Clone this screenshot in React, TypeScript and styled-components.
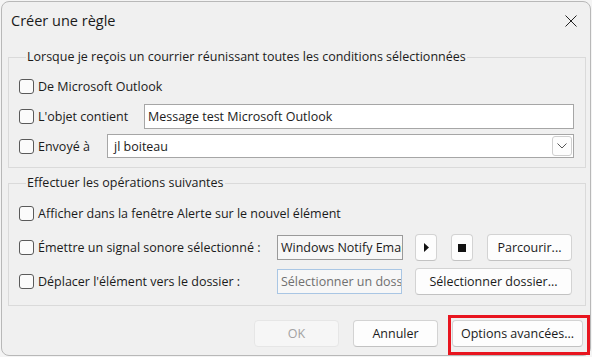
import React from "react"
import styled, { createGlobalStyle } from "styled-components"

const GlobalStyle = createGlobalStyle`
  html, body {
    margin: 0;
    padding: 0;
    background: #f4f4f4;
  }
  body {
    font-family: "Segoe UI", "Open Sans", "Noto Sans", sans-serif;
    font-size: 12.5px;
    color: #1b1b1b;
  }
  * {
    box-sizing: border-box;
  }
`

const Window = styled.div`
  margin: 1px 0 0 1px;
  width: 590px;
  height: 355px;
  background: #f0f0f0;
  border: 1px solid #b8b8b8;
  border-radius: 8px;
  display: flex;
  flex-direction: column;
`

const TitleBar = styled.div`
  height: 38px;
  display: flex;
  align-items: center;
  justify-content: space-between;
  padding: 0 12px 0 9px;
`

const Title = styled.div`
  font-size: 14.5px;
  color: #1a1a1a;
  margin-top: -1px;
`

const CloseButton = styled.button`
  border: none;
  background: transparent;
  padding: 0;
  width: 14px;
  height: 14px;
  display: flex;
  align-items: center;
  justify-content: center;
  margin-top: -1px;
`

const Body = styled.div`
  flex: 1;
  display: flex;
  flex-direction: column;
  padding: 8px 4px 0 6px;
`

const Group = styled.fieldset<{ $gap: number; $padTop: number; $padBottom: number }>`
  margin: 0;
  border: 1px solid #dadada;
  padding: ${(p) => p.$padTop}px 11px ${(p) => p.$padBottom}px 10px;
  display: flex;
  flex-direction: column;
  gap: ${(p) => p.$gap}px;
  min-width: 0;

  & + & {
    margin-top: 6px;
  }
`

const Legend = styled.legend`
  padding: 0 1px;
  margin-left: 7px;
  height: 18px;
  line-height: 18px;
`

const Row = styled.div<{ $height: number }>`
  height: ${(p) => p.$height}px;
  display: flex;
  align-items: center;
`

const CheckLabel = styled.label<{ $width?: number }>`
  display: flex;
  align-items: center;
  gap: 4px;
  flex: none;
  width: ${(p) => (p.$width ? `${p.$width}px` : "auto")};
  white-space: nowrap;
`

const Box = styled.span`
  width: 15px;
  height: 15px;
  border: 1px solid #5a5a5a;
  border-radius: 3px;
  background: #fbfbfb;
  flex: none;
`

const TextInput = styled.div<{ $width?: number; $variant?: "normal" | "readonly" | "focus" }>`
  height: 25px;
  width: ${(p) => (p.$width ? `${p.$width}px` : "auto")};
  flex: ${(p) => (p.$width ? "none" : "1")};
  border: 1px solid
    ${(p) => (p.$variant === "focus" ? "#a9c6e4" : p.$variant === "readonly" ? "#9a9a9a" : "#a6a6a6")};
  background: ${(p) => (p.$variant === "normal" ? "#ffffff" : "#f7f7f7")};
  color: ${(p) => (p.$variant === "focus" ? "#707070" : "#1b1b1b")};
  display: flex;
  align-items: center;
  padding-left: 3px;
  white-space: nowrap;
  overflow: hidden;
`

const Combo = styled.div`
  flex: 1;
  height: 24px;
  border: 1px solid #a6a6a6;
  background: #ffffff;
  display: flex;
  align-items: center;
  justify-content: space-between;
  padding: 0 1px 0 6px;
`

const ComboArrow = styled.span`
  width: 20px;
  height: 20px;
  border: 1px solid #cfcfcf;
  border-radius: 3px;
  background: #fdfdfd;
  display: flex;
  align-items: center;
  justify-content: center;
`

const Button = styled.button<{ $width: number; $disabled?: boolean; $highlight?: boolean }>`
  position: relative;
  width: ${(p) => p.$width}px;
  height: 27px;
  flex: none;
  border: 1px solid ${(p) => (p.$disabled ? "#e6e6e6" : "#d3d3d3")};
  border-bottom-color: ${(p) => (p.$disabled ? "#e6e6e6" : "#c2c2c2")};
  border-radius: 4px;
  background: ${(p) => (p.$disabled ? "#f6f6f6" : "#fdfdfd")};
  color: ${(p) => (p.$disabled ? "#a2a2a2" : "#1b1b1b")};
  font: inherit;
  display: flex;
  align-items: center;
  justify-content: center;
  padding: 0;

  ${(p) =>
    p.$highlight &&
    `
    &::after {
      content: "";
      position: absolute;
      top: -6px;
      left: -5px;
      right: -8px;
      bottom: -9px;
      border: 3px solid #e8151f;
      pointer-events: none;
    }
  `}
`

const Footer = styled.div`
  display: flex;
  justify-content: flex-end;
  align-items: center;
  padding: 14px 3px 0 0;
  gap: 14px;
`

const Spacer = styled.span<{ $w: number }>`
  width: ${(p) => p.$w}px;
  flex: none;
`

const App: React.FC = () => {
  return (
    <>
      <GlobalStyle />
      <Window>
        <TitleBar>
          <Title>Créer une règle</Title>
          <CloseButton>
            <svg width="12" height="12" viewBox="0 0 12 12">
              <path d="M0.5 0.5 L11.5 11.5 M11.5 0.5 L0.5 11.5" stroke="#222" strokeWidth="1" />
            </svg>
          </CloseButton>
        </TitleBar>

        <Body>
          <Group $gap={4} $padTop={7} $padBottom={8}>
            <Legend>Lorsque je reçois un courrier réunissant toutes les conditions sélectionnées</Legend>
            <Row $height={26}>
              <CheckLabel>
                <Box />
                De Microsoft Outlook
              </CheckLabel>
            </Row>
            <Row $height={26}>
              <CheckLabel $width={125}>
                <Box />
                L'objet contient
              </CheckLabel>
              <TextInput $variant="normal">Message test Microsoft Outlook</TextInput>
            </Row>
            <Row $height={26}>
              <CheckLabel $width={88}>
                <Box />
                Envoyé à
              </CheckLabel>
              <Combo>
                <span>jl boiteau</span>
                <ComboArrow>
                  <svg width="10" height="6" viewBox="0 0 10 6">
                    <path d="M0.5 0.5 L5 5 L9.5 0.5" fill="none" stroke="#555" strokeWidth="1" />
                  </svg>
                </ComboArrow>
              </Combo>
            </Row>
          </Group>

          <Group $gap={7} $padTop={8} $padBottom={10}>
            <Legend>Effectuer les opérations suivantes</Legend>
            <Row $height={27}>
              <CheckLabel>
                <Box />
                Afficher dans la fenêtre Alerte sur le nouvel élément
              </CheckLabel>
            </Row>
            <Row $height={27}>
              <CheckLabel $width={258}>
                <Box />
                Émettre un signal sonore sélectionné :
              </CheckLabel>
              <TextInput $width={126} $variant="readonly">
                Windows Notify Email
              </TextInput>
              <Spacer $w={12} />
              <Button $width={22}>
                <svg width="5" height="9" viewBox="0 0 5 9">
                  <path d="M0 0 L5 4.5 L0 9 Z" fill="#111" />
                </svg>
              </Button>
              <Spacer $w={14} />
              <Button $width={22}>
                <svg width="8" height="8" viewBox="0 0 8 8">
                  <rect width="8" height="8" fill="#111" />
                </svg>
              </Button>
              <Spacer $w={14} />
              <Button $width={85}>Parcourir...</Button>
            </Row>
            <Row $height={27}>
              <CheckLabel $width={258}>
                <Box />
                Déplacer l'élément vers le dossier :
              </CheckLabel>
              <TextInput $width={125} $variant="focus">
                Sélectionner un dossier
              </TextInput>
              <Spacer $w={13} />
              <Button $width={157}>Sélectionner dossier...</Button>
            </Row>
          </Group>

          <Footer>
            <Button $width={85} $disabled>
              OK
            </Button>
            <Button $width={85}>Annuler</Button>
            <Button $width={131} $highlight>
              Options avancées...
            </Button>
          </Footer>
        </Body>
      </Window>
    </>
  )
}

export default App
